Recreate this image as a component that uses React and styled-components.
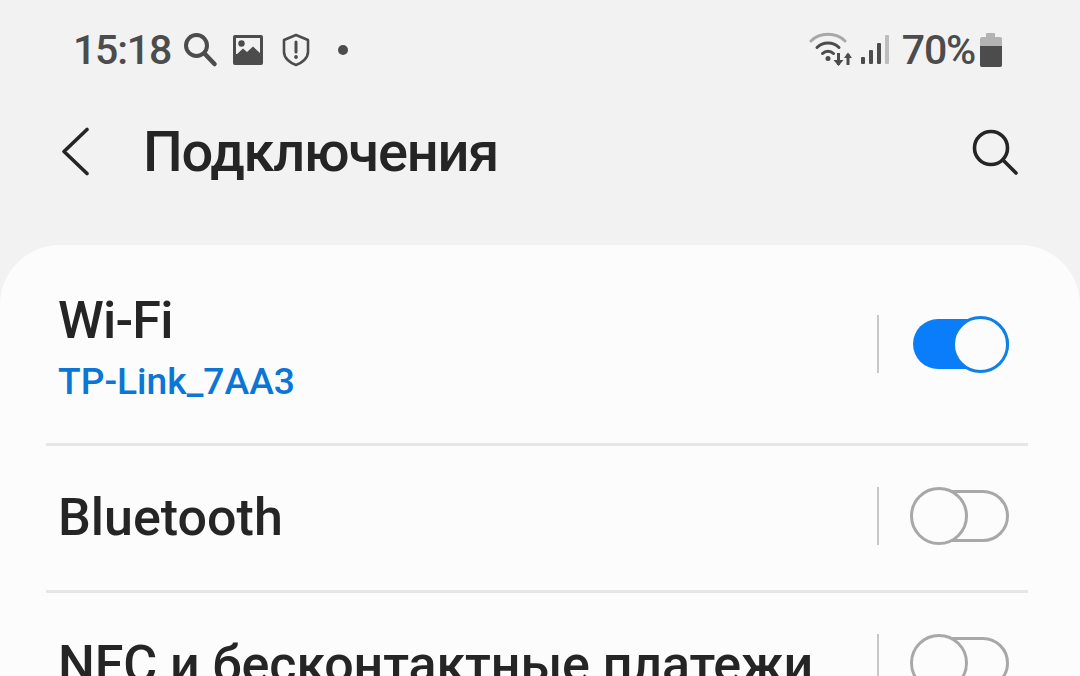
import styled, { createGlobalStyle } from 'styled-components';

const Global = createGlobalStyle`
  html, body {
    margin: 0;
    height: 676px;
    overflow: hidden;
    background: #f2f2f2;
  }
`;

const Screen = styled.div`
  width: 1080px;
  height: 676px;
  overflow: hidden;
  background: #f2f2f2;
  font-family: Roboto, "Noto Sans", sans-serif;
`;

const StatusBar = styled.div`
  display: flex;
  align-items: center;
  justify-content: space-between;
  height: 100px;
  padding: 0 78px 0 73px;
  color: #4c4c4c;
`;

const StatusGroup = styled.div`
  display: flex;
  align-items: center;
`;

const StatusText = styled.span`
  font-size: 41px;
  font-weight: 500;
  letter-spacing: -1.2px;
  line-height: 40px;
  margin: ${(p) => p.$margin || 0};
`;

const StatusIcon = styled.svg`
  display: block;
  flex: none;
  margin-left: ${(p) => p.$left || 0}px;
`;

const Header = styled.div`
  display: flex;
  align-items: center;
  height: 104px;
  padding: 0 62px 0 60px;
  color: #252525;
`;

const HeaderIcon = styled.svg`
  display: block;
  flex: none;
`;

const Title = styled.h1`
  flex: 1;
  margin: 0 0 0 53px;
  font-size: 56px;
  font-weight: 500;
  letter-spacing: -1.2px;
  line-height: 60px;
`;

const Card = styled.div`
  margin-top: 41px;
  background: #fcfcfc;
  border-radius: 60px 60px 0 0;
`;

const Row = styled.div`
  display: flex;
  align-items: center;
  height: ${(p) => p.$height}px;
  margin: 0 52px 0 46px;
  padding: 0 19px 0 12px;
  border-bottom: ${(p) => (p.$last ? 'none' : '3px solid #e6e6e6')};
`;

const RowText = styled.div`
  flex: 1;
  min-width: 0;
  padding-top: ${(p) => (p.$sub ? 6 : 0)}px;
`;

const RowTitle = styled.div`
  font-size: 52px;
  font-weight: 500;
  letter-spacing: ${(p) => p.$spacing || 0}px;
  line-height: 60px;
  color: #252525;
  white-space: nowrap;
`;

const RowSub = styled.div`
  margin-top: 8px;
  font-size: 37.2px;
  font-weight: 500;
  line-height: 44px;
  color: #0b76d6;
`;

const SwitchWrap = styled.div`
  display: flex;
  align-items: center;
  flex: none;
  margin-bottom: ${(p) => (p.$on ? 0 : 4)}px;
`;

const VLine = styled.div`
  width: 2px;
  height: 58px;
  background: #c8c8c8;
  margin-right: 34px;
`;

const Toggle = styled.div`
  position: relative;
  flex: none;
  box-sizing: border-box;
  width: 96px;
  height: ${(p) => (p.$on ? 50 : 52)}px;
  border-radius: 26px;
  background: ${(p) => (p.$on ? '#0a7dfb' : 'transparent')};
  border: ${(p) => (p.$on ? 'none' : '3px solid #a8a8a8')};
`;

const Thumb = styled.div`
  position: absolute;
  box-sizing: border-box;
  top: ${(p) => (p.$on ? -3 : -6)}px;
  ${(p) => (p.$on ? 'right: 0;' : 'left: -6px;')}
  width: ${(p) => (p.$on ? 57 : 58)}px;
  height: ${(p) => (p.$on ? 57 : 58)}px;
  border-radius: 50%;
  background: #fcfcfc;
  border: 3px solid ${(p) => (p.$on ? '#0f80e8' : '#a8a8a8')};
`;

const SearchSmall = () => (
  <StatusIcon $left={12} width="36" height="36" viewBox="0 0 36 36" fill="none">
    <circle cx="13.5" cy="13.5" r="10.5" stroke="#4c4c4c" strokeWidth="4" />
    <path d="M21.5 21.5 L31.5 32" stroke="#4c4c4c" strokeWidth="4.5" strokeLinecap="round" />
  </StatusIcon>
);

const ImageIcon = () => (
  <StatusIcon $left={13} width="32" height="30" viewBox="0 0 32 30">
    <rect x="1" y="0" width="30" height="30" rx="2" fill="#4c4c4c" />
    <rect x="4" y="3" width="24" height="16" fill="#f2f2f2" />
    <circle cx="9.5" cy="8.5" r="3.2" fill="#4c4c4c" />
    <path d="M4 20 L11 13.5 L15 17 L21 11.5 L28 18 V24 H4Z" fill="#4c4c4c" />
  </StatusIcon>
);

const ShieldIcon = () => (
  <StatusIcon $left={18} width="28" height="34" viewBox="0 0 28 34" fill="none">
    <path d="M14 2 L26 7 V19 C26 25 20 30 14 32 C8 30 2 25 2 19 V7Z" stroke="#4c4c4c" strokeWidth="2.6" strokeLinejoin="round" />
    <path d="M14 9 V19" stroke="#4c4c4c" strokeWidth="3" strokeLinecap="round" />
    <circle cx="14" cy="24" r="1.9" fill="#4c4c4c" />
  </StatusIcon>
);

const DotIcon = () => (
  <StatusIcon $left={28} width="10" height="10" viewBox="0 0 10 10">
    <circle cx="5" cy="5" r="5" fill="#4c4c4c" />
  </StatusIcon>
);

const WifiIcon = () => (
  <StatusIcon width="44" height="36" viewBox="0 0 44 36" fill="none">
    <path d="M2 9 C11 0 27 0 36 9" stroke="#a8a8a8" strokeWidth="3" strokeLinecap="round" />
    <path d="M8 15.5 C14 9.5 24 9.5 30 15.5" stroke="#4c4c4c" strokeWidth="3" strokeLinecap="round" />
    <path d="M13.5 21.5 C16.5 18.5 21.5 18.5 24.5 21.5" stroke="#4c4c4c" strokeWidth="3" strokeLinecap="round" />
    <circle cx="19" cy="26.5" r="2.5" fill="#4c4c4c" />
    <path d="M29.5 21 V33" stroke="#4c4c4c" strokeWidth="3" />
    <path d="M24.5 28 H34.5 L29.5 34Z" fill="#4c4c4c" />
    <path d="M39 33 V22" stroke="#4c4c4c" strokeWidth="3" />
    <path d="M35 26 H43 L39 20.5Z" fill="#4c4c4c" />
  </StatusIcon>
);

const SignalIcon = () => (
  <StatusIcon $left={8} width="28" height="30" viewBox="0 0 28 30">
    <rect x="0" y="22" width="4" height="7" rx="1" fill="#4c4c4c" />
    <rect x="8" y="15" width="4" height="14" rx="1" fill="#4c4c4c" />
    <rect x="16" y="8" width="4" height="21" rx="1" fill="#4c4c4c" />
    <rect x="24" y="0" width="4" height="29" rx="1" fill="#bdbdbd" />
  </StatusIcon>
);

const BatteryIcon = () => (
  <StatusIcon $left={5} width="22" height="34" viewBox="0 0 22 34">
    <rect x="6" y="0" width="9" height="5" rx="1" fill="#b3b3b3" />
    <rect x="0" y="4" width="22" height="30" rx="2" fill="#b3b3b3" />
    <path d="M0 13 H22 V32 a2 2 0 0 1 -2 2 H2 a2 2 0 0 1 -2 -2Z" fill="#4c4c4c" />
  </StatusIcon>
);

const Switch = ({ on }) => (
  <SwitchWrap $on={on}>
    <VLine />
    <Toggle $on={on}>
      <Thumb $on={on} />
    </Toggle>
  </SwitchWrap>
);

const App = () => (
  <Screen>
    <Global />
    <StatusBar>
      <StatusGroup>
        <StatusText>15:18</StatusText>
        <SearchSmall />
        <ImageIcon />
        <ShieldIcon />
        <DotIcon />
      </StatusGroup>
      <StatusGroup>
        <WifiIcon />
        <SignalIcon />
        <StatusText $margin="0 0 0 13px">70%</StatusText>
        <BatteryIcon />
      </StatusGroup>
    </StatusBar>
    <Header>
      <HeaderIcon width="30" height="50" viewBox="0 0 30 50" fill="none">
        <path d="M27 2.5 L4 24.5 L27 46.5" stroke="#252525" strokeWidth="3.6" strokeLinecap="round" strokeLinejoin="round" />
      </HeaderIcon>
      <Title>Подключения</Title>
      <HeaderIcon width="46" height="46" viewBox="0 0 46 46" fill="none">
        <circle cx="19" cy="19" r="16.5" stroke="#252525" strokeWidth="3.6" />
        <path d="M31 31 L44 44" stroke="#252525" strokeWidth="3.6" strokeLinecap="round" />
      </HeaderIcon>
    </Header>
    <Card>
      <Row $height={198}>
        <RowText $sub>
          <RowTitle $spacing={-0.8}>Wi-Fi</RowTitle>
          <RowSub>TP-Link_7AA3</RowSub>
        </RowText>
        <Switch on />
      </Row>
      <Row $height={144}>
        <RowText>
          <RowTitle>Bluetooth</RowTitle>
        </RowText>
        <Switch />
      </Row>
      <Row $height={144} $last>
        <RowText>
          <RowTitle $spacing={-0.1}>NFC и бесконтактные платежи</RowTitle>
        </RowText>
        <Switch />
      </Row>
    </Card>
  </Screen>
);

export default App;
